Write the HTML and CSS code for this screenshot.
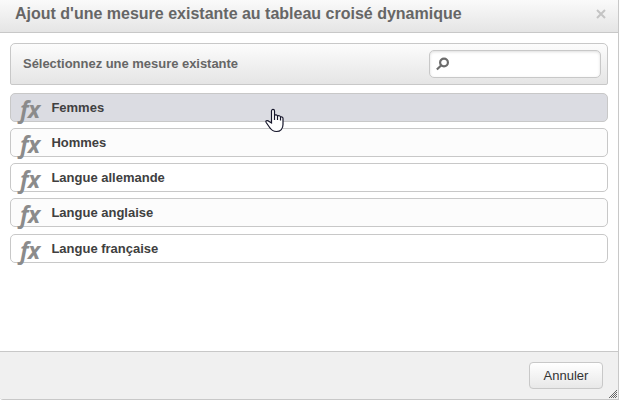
FILE: index.html
```html
<!DOCTYPE html>
<html lang="fr">
<head>
<meta charset="utf-8">
<title>Ajout d'une mesure existante</title>
<link rel="stylesheet" href="styles.css">
</head>
<body>
<section class="dialog">
  <header class="dialog-header">
    <h1>Ajout d'une mesure existante au tableau croisé dynamique</h1>
    <svg class="close" viewBox="0 0 10 10"><path d="M1 1L9 9M9 1L1 9"/></svg>
  </header>
  <main class="content">
    <div class="toolbar">
      <span class="prompt">Sélectionnez une mesure existante</span>
      <div class="search">
        <svg viewBox="0 0 14 14"><circle cx="8" cy="5.5" r="3.9"/><path d="M5.3 8.2L.9 12.5"/></svg>
      </div>
    </div>
    <ul class="measures">
      <li class="selected"><span class="fx">fx</span><span>Femmes</span></li>
      <li class="alt"><span class="fx">fx</span><span>Hommes</span></li>
      <li><span class="fx">fx</span><span>Langue allemande</span></li>
      <li class="alt"><span class="fx">fx</span><span>Langue anglaise</span></li>
      <li class="last"><span class="fx">fx</span><span>Langue française</span></li>
    </ul>
  </main>
  <footer class="dialog-footer">
    <button class="cancel">Annuler</button>
  </footer>
  <svg class="grip" viewBox="0 0 9 9"><path d="M0 8L8 0M2 8L8 2M4 8L8 4M6 8L8 6"/></svg>
  <svg class="pointer" viewBox="0 0 19 25"><path d="M6.5 15V3C6.5.9 9.5.9 9.5 3V7.5C10 6.4 12.5 6.6 12.5 8.2C13.2 7.2 15.5 7.7 15.5 9.2C16.4 8.6 18 9 18 10.5V16.5C18 20.5 15.5 23.5 11.5 23.5C7.5 23.5 5.8 21.5 4.3 19L1.2 14.5C.3 13 1.8 12.1 3.3 12.9L6.5 15ZM9.5 7.5V12M12.5 8.2V12M15.5 9.2V12.5"/></svg>
</section>
</body>
</html>
```

FILE: styles.css
```css
* { box-sizing: border-box; }

body {
  margin: 0;
  background: #fff;
  font-family: "Liberation Sans", Arial, sans-serif;
  font-size: 13px;
}

.dialog {
  position: relative;
  display: flex;
  flex-direction: column;
  width: 619px;
  height: 400px;
  border: solid #c8c8c8;
  border-width: 0 1px 1px 0;
  border-radius: 0 0 0 3px;
  overflow: hidden;
}

.dialog-header {
  display: flex;
  align-items: center;
  justify-content: space-between;
  height: 33px;
  padding: 0 12px 4px 15px;
  background: linear-gradient(#fafafa, #e5e5e5);
  border-bottom: 1px solid #c8c8c8;
}

h1 {
  margin: 0;
  color: #666;
  font-size: 16px;
  line-height: 18px;
  white-space: nowrap;
}

.close {
  width: 10px;
  height: 10px;
  margin-top: -1px;
  fill: none;
  stroke: #c4c4c4;
  stroke-width: 2;
}

.content {
  flex: 1;
  padding: 10px;
}

.toolbar {
  display: flex;
  align-items: center;
  justify-content: space-between;
  height: 42px;
  padding: 0 6px 0 12px;
  background: linear-gradient(#fcfcfc, #e5e5e5);
  border: 1px solid #c8c8c8;
  border-radius: 5px 5px 2px 2px;
}

.prompt {
  padding-bottom: 2px;
  color: #666;
  font-weight: bold;
  letter-spacing: -.03px;
}

.search {
  display: flex;
  align-items: center;
  width: 172px;
  height: 28px;
  padding-left: 6px;
  background: #fff;
  border: 1px solid #c8c8c8;
  border-radius: 5px;
  box-shadow: inset 0 1px 3px #ddd;
}

.search svg {
  width: 14px;
  height: 14px;
  fill: none;
  stroke: #6c6c6c;
  stroke-width: 2.2;
}

.measures {
  display: flex;
  flex-direction: column;
  gap: 6px;
  margin: 8px 0 0;
  padding: 0;
  list-style: none;
}

.measures li {
  display: flex;
  height: 29px;
  padding-left: 7px;
  border: 1px solid #c8c8c8;
  border-radius: 5px;
  color: #404040;
  font-weight: bold;
  line-height: 27px;
}

.measures .selected { background: #dbdce2; }
.measures .alt { background: #fcfcfc; }
.measures .last { margin-top: 1px; }

.fx {
  width: 33.4px;
  padding-left: 2px;
  color: #8b8b8b;
  font-family: "Open Sans", "Noto Sans", sans-serif;
  font-size: 23px;
  font-style: italic;
  letter-spacing: -.5px;
  line-height: 31px;
}

.dialog-footer {
  display: flex;
  align-items: flex-start;
  justify-content: flex-end;
  height: 48px;
  padding: 10px 15px 0;
  background: #f0f0f0;
  border-top: 1px solid #c8c8c8;
}

.cancel {
  width: 74px;
  height: 27px;
  padding: 0;
  color: #333;
  font: 13px "Liberation Sans", Arial, sans-serif;
  background: linear-gradient(#fff, #e8e8e8);
  border: 1px solid #c8c8c8;
  border-radius: 4px;
}

.grip {
  position: absolute;
  right: 0;
  bottom: 0;
  width: 9px;
  height: 9px;
  stroke: #444;
  stroke-width: .8;
}

.pointer {
  position: absolute;
  left: 265px;
  top: 108px;
  width: 19px;
  height: 25px;
  fill: #fff;
  stroke: #15152a;
  stroke-width: 1.2;
}
```
